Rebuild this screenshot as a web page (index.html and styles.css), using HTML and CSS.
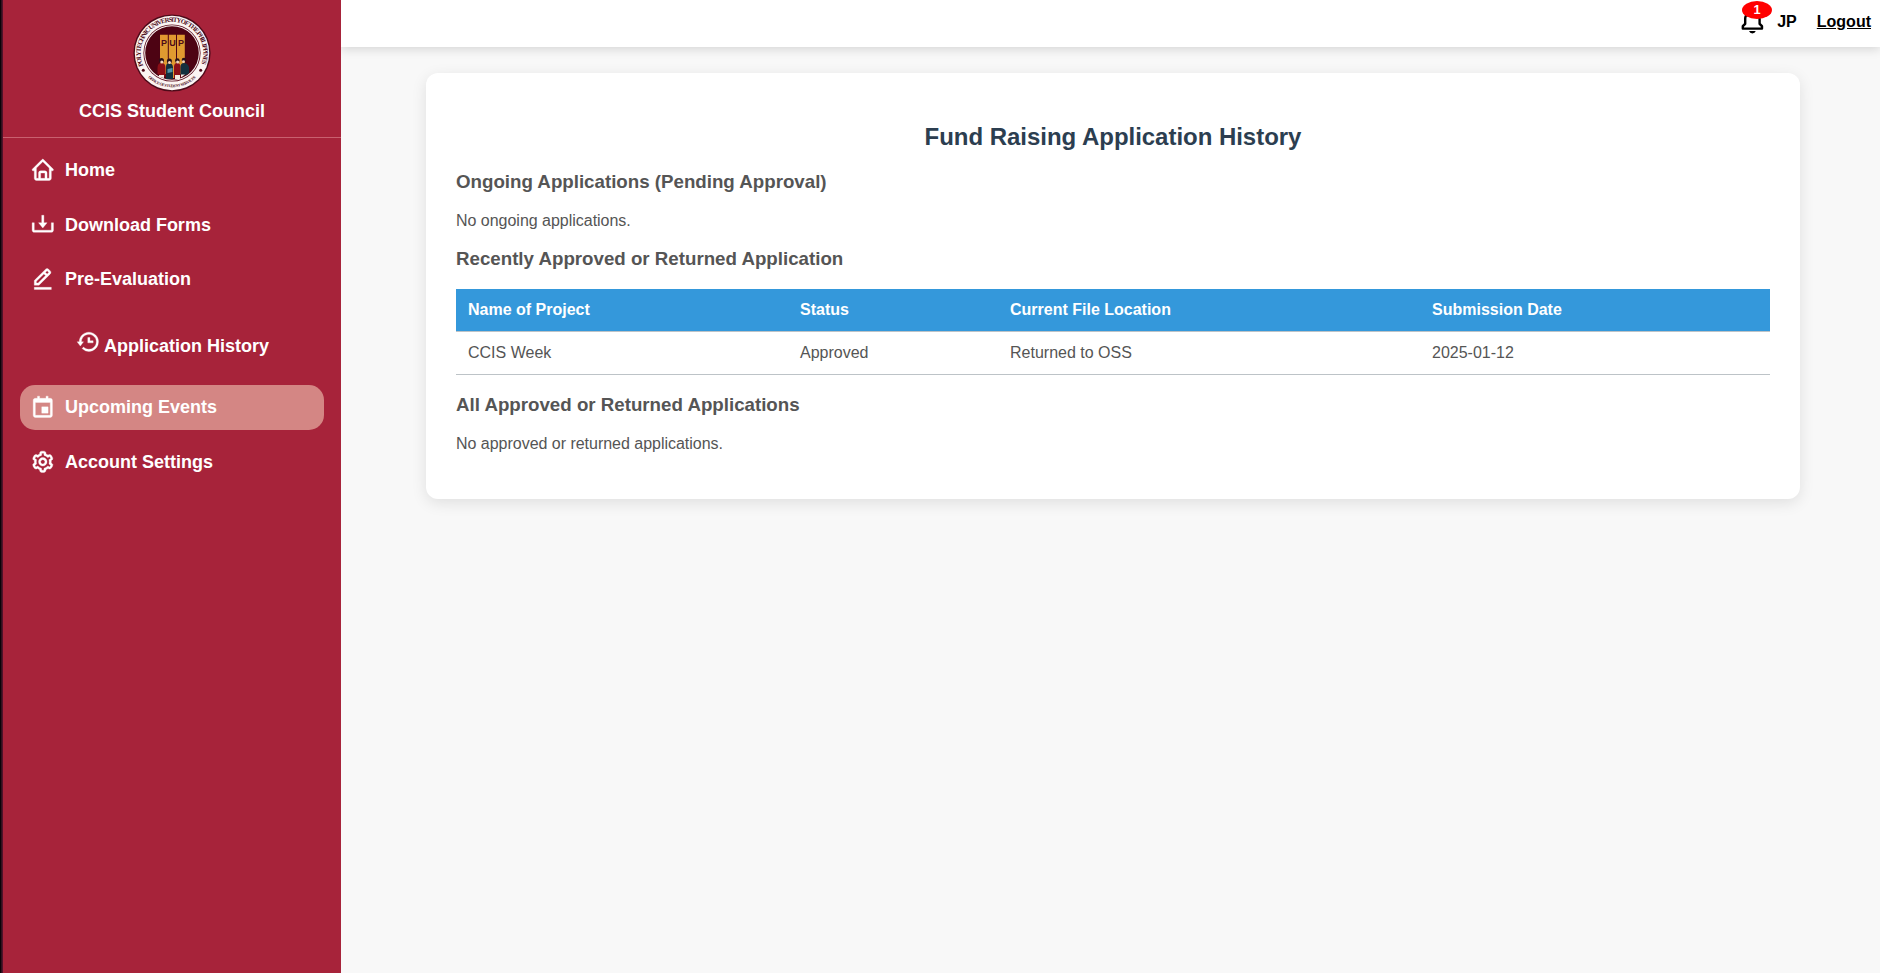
FILE: index.html
```html
<!DOCTYPE html>
<html lang="en">
<head>
<meta charset="utf-8">
<title>Fund Raising Application History</title>
<link rel="stylesheet" href="styles.css">
</head>
<body>
<div class="app">
  <aside class="sidebar">
    <div class="brand">
      <svg class="logo" viewBox="0 0 78 78">
        <defs>
          <path id="arc-top" d="M11.5 54.300A31.400 31.400 0 1 1 66.500 54.300"/>
          <path id="arc-bottom" d="M11 59A34.600 34.600 0 0 0 67 59"/>
        </defs>
        <circle cx="39" cy="39" r="38.600" fill="#4d0a19"/>
        <circle cx="39" cy="39" r="37.200" fill="#fbf5f3"/>
        <circle cx="39" cy="39" r="28.600" fill="#5a0d1e"/>
        <circle cx="39" cy="39" r="27.800" fill="#fbf5f3"/>
        <circle cx="39" cy="39" r="26.800" fill="#4d0313"/>
        <path d="M27 20.700h7.800V60H27zM35.800 20.700h7.200V64h-7.200zM44 20.700h7.800V60H44z" fill="#e09a30"/>
        <text class="logo-pup" x="28" y="32.300" textLength="23">PUP</text>
        <path d="M24.500 60v-6q0-5 4-5t4 5v9q-4-1-8-3zM41 64V53q0-4 3.200-4t3.300 4v11z" fill="#8c0f18"/>
        <path d="M33 65V53q0-4 3.200-4t3.800 4v12zM47.500 61v-8q0-4 3.500-4t5 4v6q-3 3-8.500 2z" fill="#14303f"/>
        <path d="M26 61h5v3l-5-1zM42 61h5v4h-5zM48 60.500h4l-4 3z" fill="#f3ece4"/>
        <path d="M34.500 55l5-1v4l-5 1z" fill="#4f91a5"/>
        <g fill="#281119"><circle cx="28.500" cy="46.500" r="2.500"/><circle cx="36.400" cy="47" r="2.500"/><circle cx="44.300" cy="46.500" r="2.300"/><circle cx="51" cy="46" r="2.300"/></g>
        <g fill="#f2d4bd"><circle cx="28.800" cy="48" r="1.500"/><circle cx="36.500" cy="48.400" r="1.500"/><circle cx="44.600" cy="48" r="1.500"/><circle cx="50.500" cy="47.600" r="1.400"/></g>
        <g fill="#4d0a19"><circle cx="10.300" cy="56.300" r="1.500"/><circle cx="67.700" cy="56.300" r="1.500"/></g>
        <text class="logo-ring"><textPath href="#arc-top" startOffset="3" textLength="122">POLYTECHNIC UNIVERSITY OF THE PHILIPPINES</textPath></text>
        <text class="logo-ring logo-office"><textPath href="#arc-bottom" startOffset="6" textLength="53">OFFICE OF STUDENT SERVICES</textPath></text>
      </svg>
      <div class="brand-name">CCIS Student Council</div>
    </div>
    <nav class="nav">
      <a class="nav-item">
        <svg class="icon" viewBox="0 0 24 24"><path d="M3 13h1v7c0 1.103.897 2 2 2h12c1.103 0 2-.897 2-2v-7h1a1 1 0 0 0 .707-1.707l-9-9a.999.999 0 0 0-1.414 0l-9 9A1 1 0 0 0 3 13zm7 7v-5h4v5h-4zm2-15.586 6 6V15l.001 5H16v-5c0-1.103-.897-2-2-2h-4c-1.103 0-2 .897-2 2v5H6v-9.586l6-6z"/></svg>
        <span>Home</span>
      </a>
      <a class="nav-item">
        <svg class="icon" viewBox="0 0 24 24"><path d="m12 16 4-5h-3V4h-2v7H8z"/><path d="M20 18H4v-7H2v7c0 1.103.897 2 2 2h16c1.103 0 2-.897 2-2v-7h-2v7z"/></svg>
        <span>Download Forms</span>
      </a>
      <a class="nav-item">
        <svg class="icon" viewBox="0 0 24 24"><path d="M19.045 7.401c.378-.378.586-.88.586-1.414s-.208-1.036-.586-1.414l-1.586-1.586c-.378-.378-.88-.586-1.414-.586s-1.036.208-1.413.585L4 13.585V18h4.413L19.045 7.401zm-3-3 1.587 1.585-1.59 1.584-1.586-1.585 1.589-1.584zM6 16v-1.585l7.04-7.018 1.586 1.586L7.587 16H6zm-2 4h16v2H4z"/></svg>
        <span>Pre-Evaluation</span>
      </a>
      <a class="nav-sub">
        <svg class="icon" viewBox="0 0 24 24"><path d="M12 8v5h5v-2h-3V8z"/><path d="M21.292 8.497a8.957 8.957 0 0 0-1.928-2.862 9.004 9.004 0 0 0-4.55-2.452 9.09 9.09 0 0 0-3.626 0 8.965 8.965 0 0 0-4.552 2.453 9.048 9.048 0 0 0-1.928 2.86A8.963 8.963 0 0 0 4 12l.001.025H2L5 16l3-3.975H6.001L6 12a6.957 6.957 0 0 1 1.195-3.913 7.066 7.066 0 0 1 1.891-1.892 7.034 7.034 0 0 1 2.503-1.054 7.003 7.003 0 0 1 8.269 5.445 7.117 7.117 0 0 1 0 2.824 6.936 6.936 0 0 1-1.054 2.503c-.25.371-.537.72-.854 1.036a7.058 7.058 0 0 1-2.225 1.501 6.98 6.98 0 0 1-1.313.408 7.117 7.117 0 0 1-2.823 0 6.957 6.957 0 0 1-2.501-1.053 7.066 7.066 0 0 1-1.037-.855l-1.414 1.414A8.985 8.985 0 0 0 13 21a9.05 9.05 0 0 0 3.503-.707 9.009 9.009 0 0 0 3.959-3.26A8.968 8.968 0 0 0 22 12a8.928 8.928 0 0 0-.708-3.503z"/></svg>
        <span class="nav-sub-label">Application History</span>
      </a>
      <a class="nav-item active">
        <svg class="icon" viewBox="0 0 24 24"><path d="M19 4h-2V2h-2v2H9V2H7v2H5c-1.103 0-2 .897-2 2v14c0 1.103.897 2 2 2h14c1.103 0 2-.897 2-2V6c0-1.103-.897-2-2-2zm.002 16H5V8h14l.002 12z"/><path d="M11 12h6v6h-6z"/></svg>
        <span>Upcoming Events</span>
      </a>
      <a class="nav-item">
        <svg class="icon" viewBox="0 0 24 24"><path d="M12 16c2.206 0 4-1.794 4-4s-1.794-4-4-4-4 1.794-4 4 1.794 4 4 4zm0-6c1.084 0 2 .916 2 2s-.916 2-2 2-2-.916-2-2 .916-2 2-2z"/><path d="m2.845 16.136 1 1.730c.531.917 1.809 1.261 2.730.730l.529-.306A8.100 8.100 0 0 0 9 19.402V20c0 1.103.897 2 2 2h2c1.103 0 2-.897 2-2v-.598a8.132 8.132 0 0 0 1.896-1.111l.529.306c.923.530 2.198.188 2.731-.731l.999-1.729a2.001 2.001 0 0 0-.731-2.732l-.505-.292a7.718 7.718 0 0 0 0-2.224l.505-.292a2.002 2.002 0 0 0 .731-2.732l-.999-1.729c-.531-.920-1.808-1.265-2.731-.732l-.529.306A8.100 8.100 0 0 0 15 4.598V4c0-1.103-.897-2-2-2h-2c-1.103 0-2 .897-2 2v.598a8.132 8.132 0 0 0-1.896 1.111l-.529-.306c-.924-.531-2.200-.187-2.731.732l-.999 1.729a2.001 2.001 0 0 0 .731 2.732l.505.292a7.683 7.683 0 0 0 0 2.223l-.505.292a2.003 2.003 0 0 0-.731 2.733zm3.326-2.758A5.703 5.703 0 0 1 6 12c0-.462.058-.926.170-1.378a.999.999 0 0 0-.470-1.108l-1.123-.650.998-1.729 1.145.662a.997.997 0 0 0 1.188-.142 6.071 6.071 0 0 1 2.384-1.399A1 1 0 0 0 11 5.300V4h2v1.300a1 1 0 0 0 .708.956 6.083 6.083 0 0 1 2.384 1.399.999.999 0 0 0 1.188.142l1.144-.661 1 1.729-1.124.649a1 1 0 0 0-.470 1.108c.112.452.170.916.170 1.378 0 .461-.058.925-.171 1.378a1 1 0 0 0 .471 1.108l1.123.649-.998 1.729-1.145-.661a.996.996 0 0 0-1.188.142 6.071 6.071 0 0 1-2.384 1.399A1 1 0 0 0 13 18.700l.002 1.300H11v-1.300a1 1 0 0 0-.708-.956 6.083 6.083 0 0 1-2.384-1.399.992.992 0 0 0-1.188-.141l-1.144.662-1-1.729 1.124-.651a1 1 0 0 0 .471-1.108z"/></svg>
        <span>Account Settings</span>
      </a>
    </nav>
  </aside>
  <div class="main">
    <header class="topbar">
      <div class="bell">
        <svg class="bell-icon" viewBox="0 0 24 24"><path d="M19 13.586V10c0-3.217-2.185-5.927-5.145-6.742C13.562 2.520 12.846 2 12 2s-1.562.520-1.855 1.258C7.185 4.074 5 6.783 5 10v3.586l-1.707 1.707A.996.996 0 0 0 3 16v2a1 1 0 0 0 1 1h16a1 1 0 0 0 1-1v-2a.996.996 0 0 0-.293-.707L19 13.586zM19 17H5v-.586l1.707-1.707A.996.996 0 0 0 7 14v-4c0-2.757 2.243-5 5-5s5 2.243 5 5v4c0 .266.105.520.293.707L19 16.414V17zm-7 5a2.980 2.980 0 0 0 2.818-2H9.182A2.980 2.980 0 0 0 12 22z"/></svg>
        <span class="badge">1</span>
      </div>
      <span class="user">JP</span>
      <a class="logout">Logout</a>
    </header>
    <section class="card">
      <h2 class="title">Fund Raising Application History</h2>
      <h3 class="section">Ongoing Applications (Pending Approval)</h3>
      <p class="note">No ongoing applications.</p>
      <h3 class="section">Recently Approved or Returned Application</h3>
      <table class="apps">
        <colgroup><col class="col-name"><col class="col-status"><col class="col-location"><col></colgroup>
        <thead><tr><th>Name of Project</th><th>Status</th><th>Current File Location</th><th>Submission Date</th></tr></thead>
        <tbody><tr><td>CCIS Week</td><td>Approved</td><td>Returned to OSS</td><td>2025-01-12</td></tr></tbody>
      </table>
      <h3 class="section">All Approved or Returned Applications</h3>
      <p class="note">No approved or returned applications.</p>
    </section>
  </div>
</div>
</body>
</html>
```

FILE: styles.css
```css
* { box-sizing: border-box; }

body {
  margin: 0;
  background: #f8f8f8;
  color: #555;
  font-family: "Liberation Sans", Arial, sans-serif;
  font-size: 16px;
}

.app { display: flex; height: 973px; overflow: hidden; }

.sidebar {
  position: relative;
  z-index: 1;
  width: 341px;
  flex: none;
  padding-left: 3px;
  background: linear-gradient(to right, #0a0308 1px, #30101e 1px, #30101e 2px, #50122a 2px, #50122a 3px, #a7233a 3px);
  color: #fff;
  font-size: 18px;
  font-weight: bold;
}

.brand {
  display: flex;
  flex-direction: column;
  align-items: center;
  height: 138px;
  padding-top: 14px;
  border-bottom: 1px solid #c9606f;
}
.logo { width: 78px; height: 78px; }
.logo-pup { font-size: 9px; font-weight: bold; fill: #4d0a19; }
.logo-ring { font-family: "Liberation Serif", serif; font-size: 6.600px; fill: #4d0a19; }
.logo-office { font-size: 4px; }
.brand-name { margin-top: 9px; line-height: 21px; }

.nav { display: flex; flex-direction: column; gap: 9.600px; padding: 10px 17px 0; }
.nav-item {
  display: flex;
  align-items: center;
  gap: 9.300px;
  height: 45px;
  padding-left: 10px;
  border-radius: 15px;
}
.active { background: #d48684; }
.icon {
  width: 25.600px;
  height: 25.600px;
  flex: none;
  margin-bottom: 1.800px;
  fill: currentColor;
  stroke: currentColor;
  stroke-width: 0.300;
}
.nav-sub {
  display: flex;
  align-items: flex-start;
  gap: 3px;
  height: 64px;
  padding: 17.300px 0 0 55.300px;
}
.nav-sub-label { padding-top: 7px; line-height: 21px; }

.main { flex: 1; }

.topbar {
  display: flex;
  justify-content: flex-end;
  height: 47px;
  padding-right: 9px;
  background: #fff;
  box-shadow: 0 2px 10px rgba(0, 0, 0, 0.15);
  color: #000;
  font-weight: bold;
}
.bell { position: relative; width: 28.800px; margin: 6.600px 10.500px 0 0; }
.bell-icon { display: block; width: 28.800px; height: 28.800px; }
.badge {
  position: absolute;
  top: -5.600px;
  left: 4.200px;
  width: 30px;
  height: 18px;
  border-radius: 50%;
  background: #f00;
  color: #fff;
  font-size: 12.800px;
  line-height: 18px;
  text-align: center;
}
.user { margin: 13px 20px 0 0; line-height: 18px; }
.logout { margin-top: 13px; line-height: 18px; text-decoration: underline; }

.card {
  width: 1374px;
  height: 426px;
  margin: 26px 0 0 85px;
  padding: 50px 30px 30px;
  border-radius: 12px;
  background: #fff;
  box-shadow: 0 4px 15px rgba(0, 0, 0, 0.1);
}
.title {
  margin: 0 0 21px;
  color: #2c3e50;
  font-size: 24px;
  line-height: 27px;
  letter-spacing: -0.030px;
  text-align: center;
}
.section { margin: 0; font-size: 18.720px; line-height: 21px; }
.note { margin: 20px 0 18px; line-height: 18px; letter-spacing: -0.020px; }

.apps {
  width: 100%;
  margin: 20px 0 19px;
  border-spacing: 0;
  table-layout: fixed;
}
.col-name { width: 332px; }
.col-status { width: 210px; }
.col-location { width: 422px; }
.apps th, .apps td {
  height: 43px;
  padding: 12px;
  border-bottom: 1px solid #bdc3c7;
  line-height: 18px;
  text-align: left;
}
.apps th { background: #3498db; color: #fff; }
```
